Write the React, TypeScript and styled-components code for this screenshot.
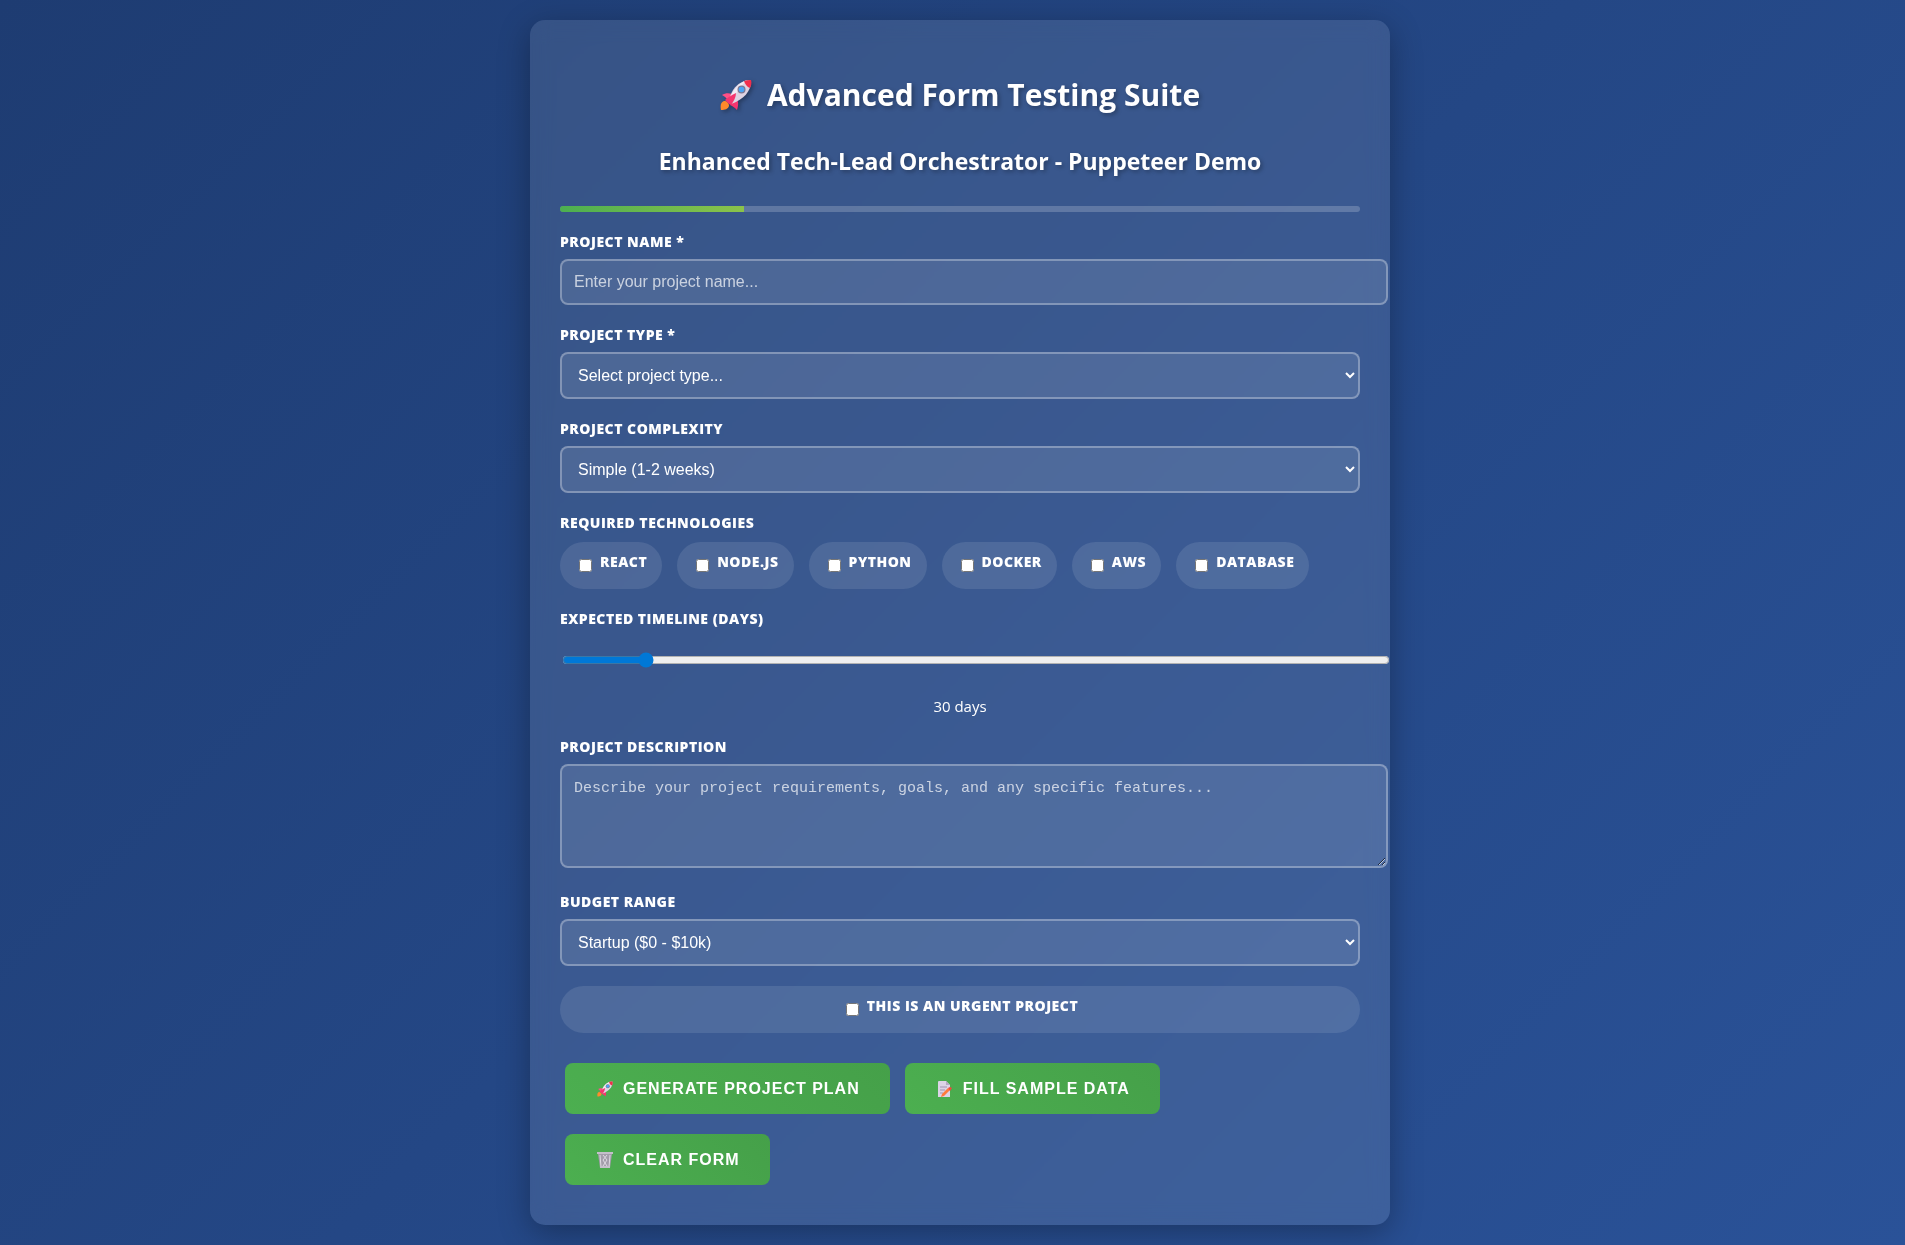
import React, { useState } from "react";
import styled, { createGlobalStyle, css } from "styled-components";

const GlobalStyle = createGlobalStyle`
  body {
    margin: 0;
    color: #fff;
    font-family: "Segoe UI", "Open Sans", "Noto Sans", sans-serif;
    font-size: 15px;
    line-height: 21px;
  }
`;

const Page = styled.main`
  box-sizing: border-box;
  min-height: 100vh;
  padding: 20px 20px 20px 35px;
  background: linear-gradient(135deg, #1e3c72 0%, #2a5298 100%);
`;

const Card = styled.section`
  max-width: 800px;
  margin: 0 auto;
  padding: 30px;
  border-radius: 15px;
  background: rgba(255, 255, 255, 0.1);
  box-shadow: 0 8px 32px rgba(0, 0, 0, 0.3);
  backdrop-filter: blur(10px);
`;

const headingText = css`
  margin: 0 0 29px;
  text-align: center;
  font-weight: 700;
  text-shadow: 2px 2px 4px rgba(0, 0, 0, 0.3);
`;

const Title = styled.h1`
  ${headingText}
  display: flex;
  align-items: center;
  justify-content: center;
  gap: 15px;
  padding-top: 23px;
  font-size: 30px;
  line-height: 43px;
`;

const Subtitle = styled.h2`
  ${headingText}
  font-size: 23px;
  line-height: 32px;
`;

const Glyph = styled.svg<{ $size: number }>`
  width: ${(p) => p.$size}px;
  height: ${(p) => p.$size}px;
  flex: none;
  filter: ${(p) => (p.$size > 20 ? "drop-shadow(2px 2px 2px rgba(0, 0, 0, 0.3))" : "none")};
`;

const ProgressTrack = styled.div`
  height: 6px;
  margin-bottom: 20px;
  overflow: hidden;
  border-radius: 3px;
  background: rgba(255, 255, 255, 0.2);
`;

const ProgressFill = styled.div`
  height: 100%;
  background: linear-gradient(90deg, #4caf50, #8bc34a);
`;

const Group = styled.div`
  margin-bottom: 20px;
`;

const FieldSet = styled.fieldset`
  min-width: 0;
  margin: 0 0 20px;
  padding: 0;
  border: 0;
`;

const labelText = css`
  display: block;
  margin-bottom: 8px;
  padding: 0;
  font-size: 14px;
  font-weight: 800;
  line-height: 19px;
  letter-spacing: 0.5px;
  text-transform: uppercase;
`;

const Label = styled.label`
  ${labelText}
`;

const Legend = styled.legend`
  ${labelText}
  margin-bottom: 10px;
`;

const fieldBox = css`
  display: block;
  width: 100%;
  padding: 12px;
  border: 2px solid rgba(255, 255, 255, 0.3);
  border-radius: 8px;
  background: rgba(255, 255, 255, 0.1);
  color: #fff;
  font-family: Arial, "Liberation Sans", sans-serif;
  font-size: 16px;

  &::placeholder {
    color: rgba(255, 255, 255, 0.7);
  }
`;

const TextInput = styled.input`
  ${fieldBox}
  height: 18px;
`;

const Select = styled.select`
  ${fieldBox}
  height: 47px;

  option {
    color: #222;
  }
`;

const TextArea = styled.textarea`
  ${fieldBox}
  height: 76px;
  margin-bottom: 24px;
  font-family: "Liberation Mono", monospace;
  font-size: 15px;
  line-height: 21px;
  resize: vertical;
`;

const Range = styled.input`
  display: block;
  width: 100%;
  height: 16px;
  margin: 10px 2px 14px;
  padding: 14px;
  box-sizing: content-box;
  accent-color: #0078d7;
`;

const RangeValue = styled.output`
  display: block;
  text-align: center;
`;

const Pills = styled.div`
  display: flex;
  flex-wrap: wrap;
  gap: 15px;
`;

const Pill = styled.div<{ $wide?: boolean }>`
  display: flex;
  align-items: center;
  justify-content: center;
  margin-bottom: ${(p) => (p.$wide ? 20 : 0)}px;
  padding: 10px 15px;
  border-radius: 25px;
  background: rgba(255, 255, 255, 0.1);
`;

const Check = styled.input`
  width: 13px;
  height: 13px;
  margin: 3px 8px 3px 4px;
`;

const Actions = styled.div`
  display: flex;
  flex-wrap: wrap;
  gap: 20px 15px;
  padding: 10px 5px;
`;

const Action = styled.button`
  display: flex;
  align-items: center;
  gap: 10px;
  height: 51px;
  padding: 0 30px 0 32px;
  border: 0;
  border-radius: 8px;
  background: linear-gradient(45deg, #4caf50, #45a049);
  color: #fff;
  font-family: Arial, "Liberation Sans", sans-serif;
  font-size: 16px;
  font-weight: 700;
  letter-spacing: 1px;
  text-transform: uppercase;
  cursor: pointer;
`;

const Rocket = ({ size }: { size: number }) => (
  <Glyph $size={size} viewBox="0 0 32 32" aria-hidden="true">
    <path d="M1 31c-1-5 0-8 3-9 3 0 5 2 5 5-1 3-4 4-8 4z" fill="#ff8a2b" />
    <path d="M2 16c3-2 7-2 10-1l-4 7c-1-3-4-5-6-6z" fill="#ff4f86" />
    <path d="M17 20c2 4 1 8 0 11-2-2-4-4-7-5z" fill="#f5356f" />
    <path d="M9 23C10 12 18 1 31 1c1 11-8 20-20 24z" fill="#ddd3e3" />
    <path d="M9 23C11 13 18 4 27 1 20 8 15 15 11 24z" fill="#f3ecf5" />
    <path d="M24 2c3-1 5-1 7-1 1 3 0 6-1 8-3-1-5-4-6-7z" fill="#f22f4c" />
    <path d="M5 21c3-3 7-5 11-7 0 4-2 8-5 12l-2-1z" fill="#f5356f" />
    <circle cx="21.500" cy="10.500" r="4" fill="#7f7790" />
    <circle cx="21.500" cy="10.500" r="2.800" fill="#4aa5f5" />
  </Glyph>
);

const Memo = () => (
  <Glyph $size={16} viewBox="0 0 16 16" aria-hidden="true">
    <path d="M1 1a1 1 0 0 1 1-1h7l4 4v12H1z" fill="#dcd3e6" />
    <path d="M9 0v4h4z" fill="#b5a8c4" />
    <path d="M3 6h7M3 9h5M3 12h3" stroke="#a193b3" />
    <path d="m5 13 6-6 2 2-6 6-3 1z" fill="#ff7a3c" />
    <path d="m11 7 2-1 2 1-2 3z" fill="#f0483e" />
  </Glyph>
);

const Bin = () => (
  <Glyph $size={16} viewBox="0 0 16 16" aria-hidden="true">
    <path d="M1 2h14l-2 14H3z" fill="#a39dab" />
    <path d="M3 3l1 12M13 3l-1 12M6 3l4 5-4 6M10 3 6 8l4 6" fill="none" stroke="#dedae3" />
    <path d="M0 0h16v2H0zM3 14h10v2H3z" fill="#c4bfcb" />
  </Glyph>
);

const technologies = ["React", "Node.js", "Python", "Docker", "AWS", "Database"];

export default function App() {
  const [days, setDays] = useState(30);
  const progress = 23;

  return (
    <>
      <GlobalStyle />
      <Page>
        <Card>
          <Title>
            <Rocket size={32} />
            Advanced Form Testing Suite
          </Title>
          <Subtitle>Enhanced Tech-Lead Orchestrator - Puppeteer Demo</Subtitle>
          <ProgressTrack>
            <ProgressFill style={{ width: `${progress}%` }} />
          </ProgressTrack>
          <form onSubmit={(e) => e.preventDefault()}>
            <Group>
              <Label htmlFor="name">Project Name *</Label>
              <TextInput id="name" type="text" placeholder="Enter your project name..." />
            </Group>
            <Group>
              <Label htmlFor="type">Project Type *</Label>
              <Select id="type">
                <option>Select project type...</option>
              </Select>
            </Group>
            <Group>
              <Label htmlFor="complexity">Project Complexity</Label>
              <Select id="complexity">
                <option>Simple (1-2 weeks)</option>
              </Select>
            </Group>
            <FieldSet>
              <Legend>Required Technologies</Legend>
              <Pills>
                {technologies.map((name) => (
                  <Pill key={name}>
                    <Check type="checkbox" id={name} />
                    <Label htmlFor={name}>{name}</Label>
                  </Pill>
                ))}
              </Pills>
            </FieldSet>
            <Group>
              <Label htmlFor="timeline">Expected Timeline (Days)</Label>
              <Range
                id="timeline"
                type="range"
                min={1}
                max={365}
                value={days}
                onChange={(e) => setDays(Number(e.target.value))}
              />
              <RangeValue htmlFor="timeline">{days} days</RangeValue>
            </Group>
            <Group>
              <Label htmlFor="description">Project Description</Label>
              <TextArea
                id="description"
                placeholder="Describe your project requirements, goals, and any specific features..."
              />
            </Group>
            <Group>
              <Label htmlFor="budget">Budget Range</Label>
              <Select id="budget">
                <option>Startup ($0 - $10k)</option>
              </Select>
            </Group>
            <Pill $wide>
              <Check type="checkbox" id="urgent" />
              <Label htmlFor="urgent">This is an urgent project</Label>
            </Pill>
            <Actions>
              <Action type="submit">
                <Rocket size={16} />
                Generate Project Plan
              </Action>
              <Action type="button">
                <Memo />
                Fill Sample Data
              </Action>
              <Action type="reset">
                <Bin />
                Clear Form
              </Action>
            </Actions>
          </form>
        </Card>
      </Page>
    </>
  );
}
